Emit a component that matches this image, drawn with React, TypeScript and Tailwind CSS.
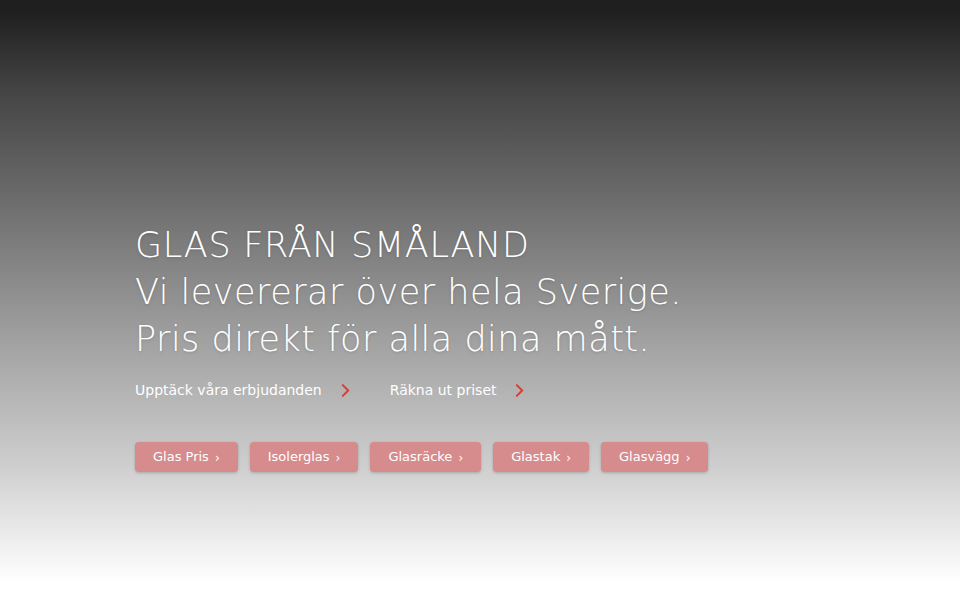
import React from 'react';

const links = ['Upptäck våra erbjudanden', 'Räkna ut priset'];
const buttons = ['Glas Pris', 'Isolerglas', 'Glasräcke', 'Glastak', 'Glasvägg'];

const Chevron: React.FC<{ className?: string }> = ({ className }) => (
  <svg viewBox="0 0 10 16" className={className} fill="none" stroke="currentColor" strokeWidth="2.2" strokeLinecap="round">
    <path d="M2 2l6 6-6 6" />
  </svg>
);

const App: React.FC = () => {
  return (
    <div
      className="w-[960px] h-[600px] overflow-hidden bg-[linear-gradient(to_bottom,#1f1f1f_2%,#444_15%,#707070_35%,#a8a8a8_60%,#cfcfcf_78%,#ffffff_97%)] font-['DejaVu_Sans',sans-serif]"
    >
      <div className="pl-[135px] pt-[222px]">
        <h1 className="text-[35px] font-extralight leading-[47px] text-white tracking-[0.5px] [text-shadow:0_1px_3px_rgba(0,0,0,0.15)]">
          <span className="tracking-[0.7px]">GLAS FRÅN SMÅLAND</span>
          <br />
          Vi levererar över hela Sverige.
          <br />
          Pris direkt för alla dina mått.
        </h1>

        <div className="mt-[17px] flex items-center gap-[40px]">
          {links.map((l) => (
            <a key={l} href="#" className="flex items-center gap-[19px] text-[14px] text-white">
              <span>{l}</span>
              <Chevron className="w-[9px] h-[15px] text-[#e2382f]" />
            </a>
          ))}
        </div>

        <div className="mt-[41px] flex gap-[12px]">
          {buttons.map((b) => (
            <a
              key={b}
              href="#"
              className="flex h-[30px] items-center gap-[6px] rounded-[4px] bg-[#d68b8d] px-[18px] text-[13px] text-white shadow-[0_1px_3px_rgba(0,0,0,0.2)]"
            >
              <span>{b}</span>
              <span className="text-[12px] pt-[1px]">›</span>
            </a>
          ))}
        </div>
      </div>
    </div>
  );
};

export default App;
